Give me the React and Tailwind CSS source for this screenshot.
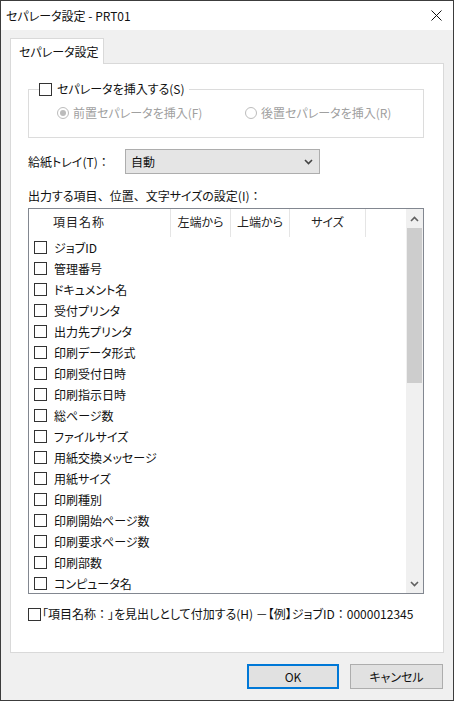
import React from 'react';

const ITEMS = [
  'ジョブID',
  '管理番号',
  'ドキュメント名',
  '受付プリンタ',
  '出力先プリンタ',
  '印刷データ形式',
  '印刷受付日時',
  '印刷指示日時',
  '総ページ数',
  'ファイルサイズ',
  '用紙交換メッセージ',
  '用紙サイズ',
  '印刷種別',
  '印刷開始ページ数',
  '印刷要求ページ数',
  '印刷部数',
  'コンピュータ名',
];

// full-width punctuation keeps its full advance (palt would squeeze it)
function Fw({ children }) {
  return <span className="[font-feature-settings:normal]">{children}</span>;
}

function Box() {
  return <span className="block w-[13px] h-[13px] border border-[#333333] bg-white shrink-0" />;
}

function Radio({ checked }) {
  return (
    <span className="flex items-center justify-center w-[12px] h-[12px] rounded-full border border-[#bcbcbc] bg-white shrink-0">
      {checked && <span className="block w-[6px] h-[6px] rounded-full bg-[#bcbcbc]" />}
    </span>
  );
}

function Chevron({ up, className }) {
  return (
    <svg width="9" height="6" viewBox="0 0 9 6" className={className}>
      <polyline
        points={up ? '1,5 4.5,1.5 8,5' : '1,1 4.5,4.5 8,1'}
        fill="none"
        stroke="currentColor"
        strokeWidth="1.6"
      />
    </svg>
  );
}

export default function App() {
  return (
    <div className="w-[454px] h-[701px] flex flex-col bg-[#f0f0f0] border border-[#3c3c3c] text-[12px] leading-[16px] text-[#111111] font-['Noto_Sans_CJK_JP','Noto_Sans',sans-serif] [font-feature-settings:'palt'] overflow-hidden">
      {/* title bar */}
      <div className="h-[29px] shrink-0 bg-white flex items-center justify-between pl-[5px] pr-[11px]">
        <span>セパレータ設定 - PRT01</span>
        <svg width="11" height="11" viewBox="0 0 11 11">
          <path d="M0.5 0.5 L10.5 10.5 M10.5 0.5 L0.5 10.5" stroke="#111" strokeWidth="1" />
        </svg>
      </div>

      <div className="flex-1 flex flex-col pl-[9px] pr-[9px] pt-[8px]">
        {/* tab */}
        <div className="relative z-10 w-[94px] h-[26px] -mb-px bg-white border border-b-0 border-[#d9d9d9] flex items-center pl-[8px]">
          セパレータ設定
        </div>

        {/* tab panel */}
        <div className="h-[590px] bg-white border border-[#d9d9d9] flex flex-col pl-[17px] pr-[19px]">
          <fieldset className="mt-[17px] border border-[#dcdcdc] pt-[8px] pb-[16px]">
            <legend className="ml-[10px] pr-[4px]">
              <span className="flex items-center gap-[5px]">
                <Box />
                <span>セパレータを挿入する(S)</span>
              </span>
            </legend>
            <div className="h-[16px] flex items-center text-[#a0a0a0]">
              <span className="flex items-center gap-[4px] ml-[28px] w-[188px]">
                <Radio checked />
                <span>前置セパレータを挿入(F)</span>
              </span>
              <span className="flex items-center gap-[4px]">
                <Radio />
                <span>後置セパレータを挿入(R)</span>
              </span>
            </div>
          </fieldset>

          <div className="mt-[11px] h-[25px] flex items-center">
            <span className="w-[97px]">
              給紙トレイ(T)<Fw>：</Fw>
            </span>
            <div className="w-[195px] h-[25px] bg-[#e5e5e5] border border-[#adadad] flex items-center justify-between pl-[5px] pr-[6px]">
              <span>自動</span>
              <Chevron className="text-[#444444]" />
            </div>
          </div>

          <div className="mt-[14px]">
            出力する項目<Fw>、</Fw>位置<Fw>、</Fw>文字サイズの設定(I)<Fw>：</Fw>
          </div>

          {/* list */}
          <div className="mt-[4px] h-[386px] border border-[#828790] flex overflow-hidden">
            <div className="flex-1 flex flex-col overflow-hidden">
              <div className="h-[28px] shrink-0 flex text-[#222222]">
                <div className="w-[142px] border-r border-[#e5e5e5] pl-[24px] pt-[5px] tracking-[1px]">項目名称</div>
                <div className="w-[60px] border-r border-[#e5e5e5] pt-[5px] text-center">左端から</div>
                <div className="w-[59px] border-r border-[#e5e5e5] pt-[5px] text-center">上端から</div>
                <div className="w-[76px] border-r border-[#e5e5e5] pt-[5px] text-center">サイズ</div>
              </div>
              {ITEMS.map((item) => (
                <div key={item} className="h-[21px] shrink-0 flex items-center pl-[5px] gap-[7px]">
                  <Box />
                  <span>{item}</span>
                </div>
              ))}
            </div>
            <div className="w-[17px] shrink-0 bg-[#f0f0f0] flex flex-col">
              <div className="h-[19px] flex items-center justify-center text-[#606060]">
                <Chevron up />
              </div>
              <div className="h-[155px] mx-px bg-[#cdcdcd]" />
              <div className="flex-1" />
              <div className="h-[19px] flex items-center justify-center text-[#606060]">
                <Chevron />
              </div>
            </div>
          </div>

          <div className="mt-[12px] h-[16px] flex items-center gap-[1px] whitespace-nowrap">
            <Box />
            <span>
              「項目名称<Fw>：</Fw>」を見出しとして付加する(H) <Fw>－</Fw>【例】ジョブID<Fw>：</Fw>0000012345
            </span>
          </div>
        </div>

        {/* buttons */}
        <div className="mt-[11px] flex justify-end gap-[11px] pr-px">
          <button className="w-[92px] h-[25px] bg-[#e1e1e1] border-2 border-[#0078d7] flex items-center justify-center">
            OK
          </button>
          <button className="w-[93px] h-[25px] bg-[#e1e1e1] border border-[#adadad] flex items-center justify-center">
            キャンセル
          </button>
        </div>
      </div>
    </div>
  );
}
